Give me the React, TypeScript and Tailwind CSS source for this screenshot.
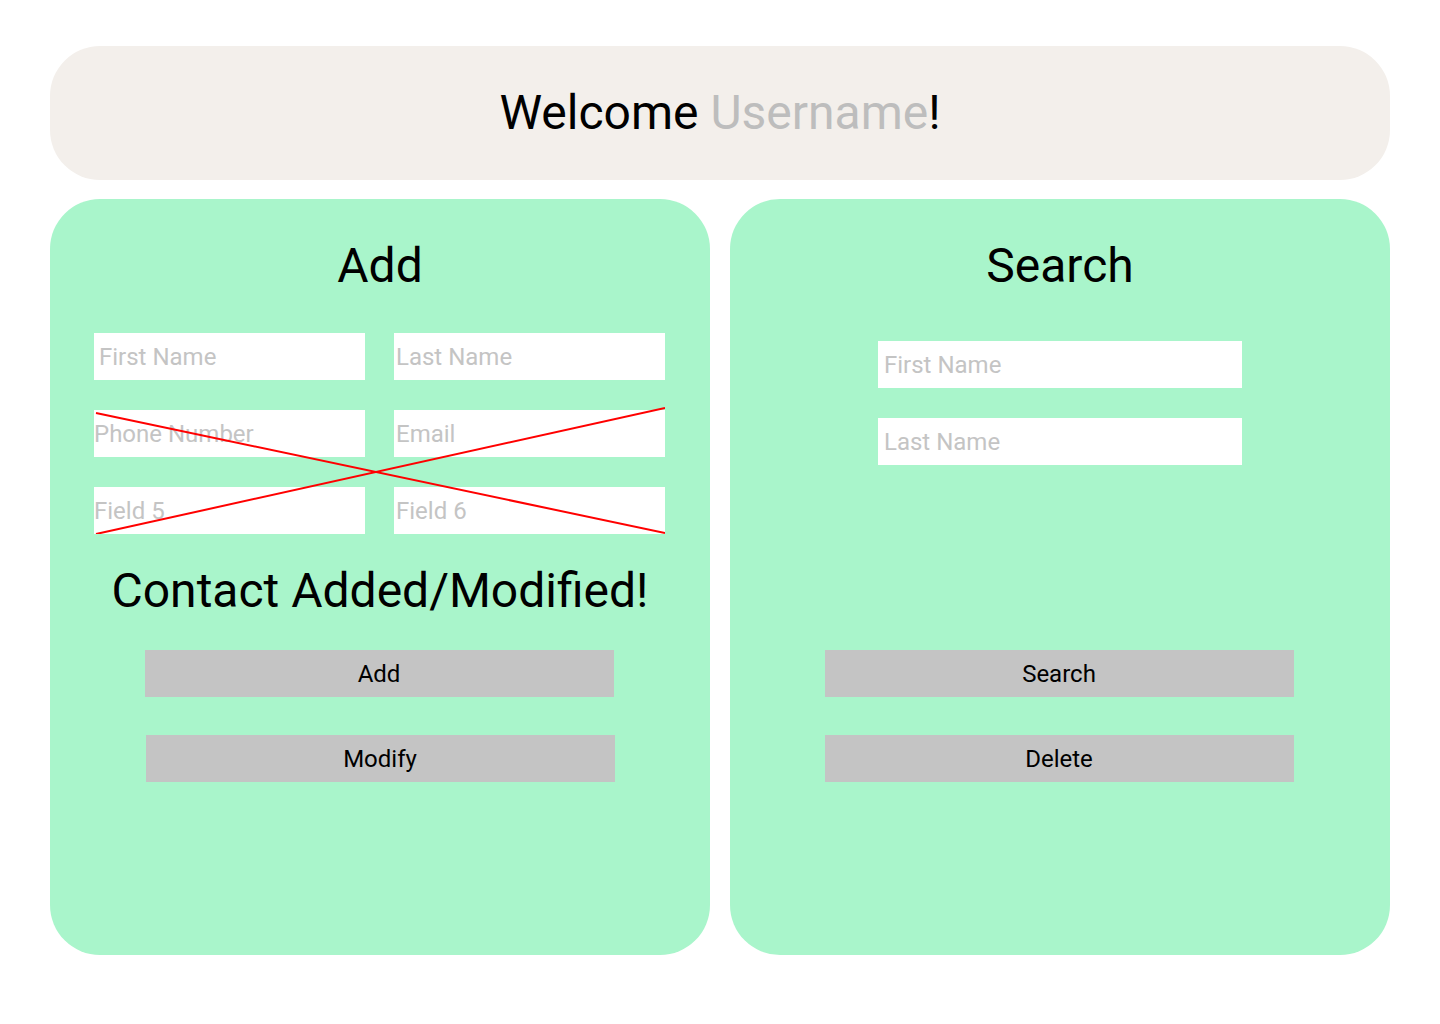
import React from "react";

const font = { fontFamily: "Roboto, 'Noto Sans', sans-serif" };

function Field({ placeholder, className }: { placeholder: string; className?: string }) {
  return (
    <input
      placeholder={placeholder}
      className={
        "h-[47px] bg-white text-[24px] text-black placeholder:text-[#c4c4c4] outline-none " +
        (className ?? "")
      }
    />
  );
}

function GrayButton({ label, className }: { label: string; className?: string }) {
  return (
    <button
      className={
        "w-[469px] h-[47px] bg-[#c4c4c4] text-[24px] text-black flex items-center justify-center " +
        (className ?? "")
      }
    >
      {label}
    </button>
  );
}

export default function App() {
  return (
    <div className="w-[1440px] h-[1024px] bg-white px-[50px] pt-[46px]" style={font}>
      {/* Header */}
      <header className="h-[134px] rounded-[50px] bg-[#f3efeb] flex items-center justify-center">
        <h1 className="text-[48px] leading-[56px] text-black">
          Welcome <span className="text-[#bdbdbd]">Username</span>!
        </h1>
      </header>

      <div className="mt-[19px] flex gap-[20px]">
        {/* Add panel */}
        <section className="w-[660px] h-[756px] rounded-[50px] bg-[#a9f5cb] flex flex-col items-center">
          <h2 className="mt-[39px] text-[48px] leading-[56px] text-black">Add</h2>

          <div className="relative mt-[39px] -ml-[1px] grid grid-cols-[271px_271px] gap-x-[29px] gap-y-[30px]">
            <Field placeholder="First Name" className="px-[5px]" />
            <Field placeholder="Last Name" className="px-[2px]" />
            <Field placeholder="Phone Number" />
            <Field placeholder="Email" className="px-[2px]" />
            <Field placeholder="Field 5" />
            <Field placeholder="Field 6" className="px-[2px]" />
            <svg
              className="absolute left-0 top-0 pointer-events-none"
              width="571"
              height="201"
              viewBox="0 0 571 201"
            >
              <line x1="2" y1="80" x2="571" y2="200" stroke="#ff0000" strokeWidth="2" />
              <line x1="2" y1="201" x2="571" y2="75" stroke="#ff0000" strokeWidth="2" />
            </svg>
          </div>

          <p className="mt-[29px] text-[48px] leading-[56px] text-black">Contact Added/Modified!</p>

          <GrayButton label="Add" className="mt-[31px] -translate-x-[1px]" />
          <GrayButton label="Modify" className="mt-[38px]" />
        </section>

        {/* Search panel */}
        <section className="w-[660px] h-[756px] rounded-[50px] bg-[#a9f5cb] flex flex-col items-center">
          <h2 className="mt-[39px] text-[48px] leading-[56px] text-black">Search</h2>

          <div className="mt-[47px] flex flex-col gap-[30px]">
            <Field placeholder="First Name" className="w-[364px] px-[6px]" />
            <Field placeholder="Last Name" className="w-[364px] px-[6px]" />
          </div>

          <GrayButton label="Search" className="mt-[185px] -translate-x-[1px]" />
          <GrayButton label="Delete" className="mt-[38px] -translate-x-[1px]" />
        </section>
      </div>
    </div>
  );
}
